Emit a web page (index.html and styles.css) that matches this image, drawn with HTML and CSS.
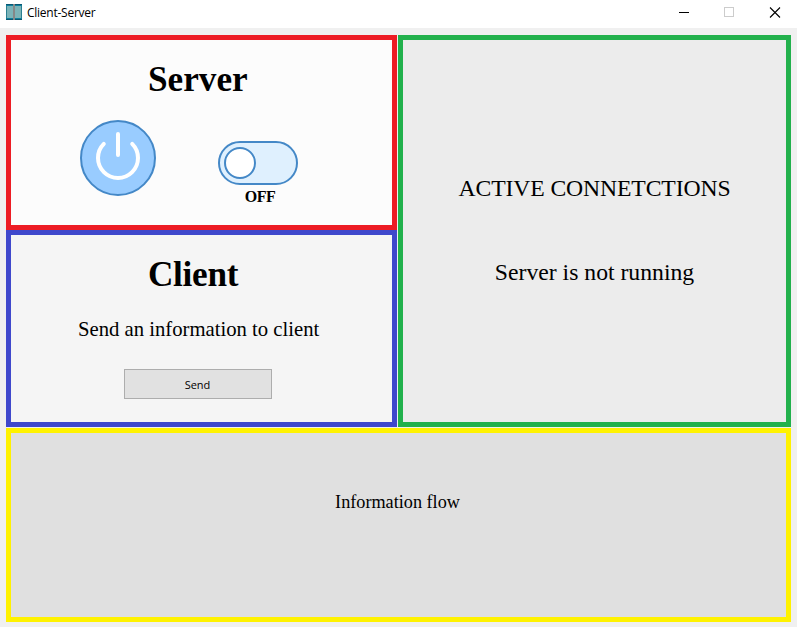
FILE: index.html
```html
<!DOCTYPE html>
<html lang="en">
<head>
<meta charset="utf-8">
<title>Client-Server</title>
<link rel="stylesheet" href="styles.css">
</head>
<body>
<header class="titlebar">
  <svg class="app-icon" width="16" height="16" viewBox="0 0 16 16" shape-rendering="crispEdges">
    <rect width="16" height="16" fill="#0f7f9c"/>
    <rect x="1" y="2" width="6" height="12" fill="#7bb3b8"/>
    <rect x="9" y="2" width="6" height="12" fill="#7bb3b8"/>
    <rect width="16" height="1" fill="#0a5672"/>
    <rect y="15" width="16" height="1" fill="#0a5672"/>
    <rect y="2" width="1" height="12" fill="#2b7f90"/>
    <rect x="15" y="2" width="1" height="12" fill="#2b7f90"/>
    <rect x="7" width="2" height="16" fill="#858788"/>
  </svg>
  <span class="title">Client-Server</span>
  <svg class="controls" width="102" height="12" viewBox="0 0 102 12" fill="none" shape-rendering="crispEdges">
    <path d="M0 6.5h10" stroke="#000"/>
    <rect x="45.5" y="1.5" width="9" height="9" stroke="#ccc"/>
    <path d="M91 1.5l10 10M101 1.5l-10 10" stroke="#000" stroke-width="1.1" shape-rendering="auto"/>
  </svg>
</header>
<main class="board">
  <section class="panel server">
    <h1>Server</h1>
    <div class="power-row">
      <svg class="power" width="76" height="76" viewBox="0 0 76 76" fill="none">
        <circle cx="38" cy="38" r="37" fill="#99ccff" stroke="#4488c7" stroke-width="2"/>
        <path d="M23.8 23.8A20 20 0 1 0 52.2 23.8M38 14v21" stroke="#fff" stroke-width="4" stroke-linecap="round"/>
      </svg>
      <div class="switch">
        <svg width="80" height="44" viewBox="0 0 80 44">
          <rect x="1" y="1" width="78" height="42" rx="21" fill="#dff0fe" stroke="#4488c7" stroke-width="2"/>
          <circle cx="22" cy="22" r="15" fill="#fff" stroke="#4488c7" stroke-width="2"/>
        </svg>
        <span class="state">OFF</span>
      </div>
    </div>
  </section>
  <section class="panel client">
    <h1 class="client-title">Client</h1>
    <p class="hint">Send an information to client</p>
    <button class="send">Send</button>
  </section>
  <section class="panel connections">
    <p class="heading">ACTIVE CONNETCTIONS</p>
    <p class="status">Server is not running</p>
  </section>
  <section class="panel flow"><p>Information flow</p></section>
</main>
</body>
</html>
```
FILE: styles.css
```css
* { box-sizing: border-box; }
body {
  margin: 0;
  width: 797px;
  height: 627px;
  overflow: hidden;
  background: #f0f0f0;
  color: #000;
  font-family: "Liberation Serif", serif;
}
h1, p { margin: 0; white-space: nowrap; }
.titlebar {
  display: flex;
  align-items: center;
  height: 28px;
  padding: 0 16px 4px 6px;
  background: #fff;
}
.title {
  margin: 2px 0 0 5px;
  font: 12px/16px "Open Sans", sans-serif;
  letter-spacing: -0.25px;
}
.controls { margin-left: auto; }
.board {
  display: grid;
  grid-template-columns: 391px 393px;
  grid-template-rows: 195px 197px 194px;
  column-gap: 1px;
  padding: 7px 6px 5px;
}
.panel { border: 5px solid; }
.server { border-color: #ed1c24; background: #fcfcfc; }
.client { border-color: #3f48cc; background: #f5f5f5; }
.connections {
  grid-column: 2;
  grid-row: 1 / 3;
  padding-top: 134px;
  border-color: #22b14c;
  background: #ececec;
  font-size: 23.7px;
  line-height: 28px;
  text-align: center;
}
.heading { letter-spacing: -0.13px; }
.status { margin-top: 56px; }
.flow {
  grid-column: 1 / 3;
  margin-top: 1px;
  height: 194px;
  padding: 58px 2px 0 0;
  border-color: #fff200;
  background: #e0e0e0;
  font-size: 18.2px;
  line-height: 22px;
  text-align: center;
}
h1 {
  padding: 20px 0 0 137px;
  font-size: 35.2px;
  line-height: 40px;
}
.client-title { letter-spacing: -0.3px; }
.power-row {
  display: flex;
  align-items: flex-start;
  padding: 20px 0 0 69px;
}
.switch {
  display: flex;
  flex-direction: column;
  align-items: center;
  margin: 21px 0 0 62px;
}
.state {
  margin-left: 4px;
  font-size: 16px;
  font-weight: bold;
  letter-spacing: -0.5px;
  line-height: 24px;
}
.hint {
  padding: 22px 0 0 67px;
  font-size: 20.7px;
  line-height: 24px;
}
.send {
  display: block;
  width: 148px;
  height: 30px;
  margin: 28px 0 0 113px;
  padding: 2px 1px 0 0;
  border: 1px solid #adadad;
  border-radius: 0;
  background: #e1e1e1;
  color: #000;
  font: 11px/16px "Open Sans", sans-serif;
}
```
